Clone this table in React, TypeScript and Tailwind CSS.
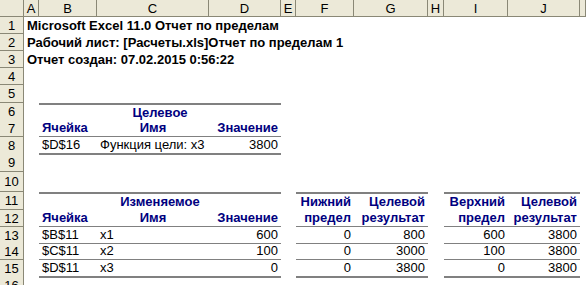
import React from "react";

const GRID =
  "grid grid-cols-[24px_15px_58px_112px_72px_15px_58px_74px_16px_64px_72px_1fr]";

const HDR = "bg-[#ECE9D8] border-[#8a8876]";

function RowNum({ n }: { n: number }) {
  return (
    <div
      className={`${HDR} border-r border-b flex items-center justify-center text-black leading-none`}
    >
      {n}
    </div>
  );
}

const cell = "flex items-end px-[3px] pb-[1px] leading-[15px] whitespace-nowrap";
const hd = "font-bold text-[#000080]";
const T = "border-t-2 border-[#808080]";
const Bthin = "border-b border-[#808080]";
const Bthick = "border-b-2 border-[#808080]";

export default function App() {
  const cols = ["A", "B", "C", "D", "E", "F", "G", "H", "I", "J", ""];
  return (
    <div
      className="w-[586px] h-[285px] overflow-hidden bg-white text-[13px] text-black"
      style={{ fontFamily: '"Liberation Sans", Arial, sans-serif' }}
    >
      {/* column header */}
      <div className={`${GRID} h-[17px]`}>
        <div className={`${HDR} border-r border-b`} />
        {cols.map((c, i) => (
          <div
            key={i}
            className={`${HDR} border-r border-b flex items-center justify-center leading-none`}
          >
            {c}
          </div>
        ))}
      </div>

      {/* row 1 */}
      <div className={`${GRID} h-[17px]`}>
        <RowNum n={1} />
        <div className={`${cell} col-span-9 font-bold`}>Microsoft Excel 11.0 Отчет по пределам</div>
      </div>
      {/* row 2 */}
      <div className={`${GRID} h-[17px]`}>
        <RowNum n={2} />
        <div className={`${cell} col-span-9 font-bold`}>Рабочий лист: [Расчеты.xls]Отчет по пределам 1</div>
      </div>
      {/* row 3 */}
      <div className={`${GRID} h-[17px]`}>
        <RowNum n={3} />
        <div className={`${cell} col-span-9 font-bold`}>Отчет создан: 07.02.2015 0:56:22</div>
      </div>
      {/* row 4 */}
      <div className={`${GRID} h-[17px]`}>
        <RowNum n={4} />
      </div>
      {/* row 5 */}
      <div className={`${GRID} h-[18px]`}>
        <RowNum n={5} />
      </div>
      {/* row 6 */}
      <div className={`${GRID} h-[17px]`}>
        <RowNum n={6} />
        <div />
        <div className={`${cell} ${hd} ${T} col-span-3 justify-center`}>Целевое</div>
      </div>
      {/* row 7 */}
      <div className={`${GRID} h-[17px]`}>
        <RowNum n={7} />
        <div />
        <div className={`${cell} ${hd} ${Bthin}`}>Ячейка</div>
        <div className={`${cell} ${hd} ${Bthin} justify-center`}>Имя</div>
        <div className={`${cell} ${hd} ${Bthin} justify-end`}>Значение</div>
      </div>
      {/* row 8 */}
      <div className={`${GRID} h-[17px]`}>
        <RowNum n={8} />
        <div />
        <div className={`${cell} ${Bthick}`}>$D$16</div>
        <div className={`${cell} ${Bthick}`}>Функция цели: x3</div>
        <div className={`${cell} ${Bthick} justify-end`}>3800</div>
      </div>
      {/* row 9 */}
      <div className={`${GRID} h-[18px]`}>
        <RowNum n={9} />
      </div>
      {/* row 10 */}
      <div className={`${GRID} h-[20px]`}>
        <RowNum n={10} />
      </div>
      {/* row 11 */}
      <div className={`${GRID} h-[18px]`}>
        <RowNum n={11} />
        <div />
        <div className={`${cell} ${hd} ${T} col-span-3 justify-center`}>Изменяемое</div>
        <div />
        <div className={`${cell} ${hd} ${T} justify-end`}>Нижний</div>
        <div className={`${cell} ${hd} ${T} justify-end`}>Целевой</div>
        <div />
        <div className={`${cell} ${hd} ${T} justify-end`}>Верхний</div>
        <div className={`${cell} ${hd} ${T} justify-end`}>Целевой</div>
      </div>
      {/* row 12 */}
      <div className={`${GRID} h-[17px]`}>
        <RowNum n={12} />
        <div />
        <div className={`${cell} ${hd} ${Bthin}`}>Ячейка</div>
        <div className={`${cell} ${hd} ${Bthin} justify-center`}>Имя</div>
        <div className={`${cell} ${hd} ${Bthin} justify-end`}>Значение</div>
        <div />
        <div className={`${cell} ${hd} ${Bthin} justify-end`}>предел</div>
        <div className={`${cell} ${hd} ${Bthin} justify-end`}>результат</div>
        <div />
        <div className={`${cell} ${hd} ${Bthin} justify-end`}>предел</div>
        <div className={`${cell} ${hd} ${Bthin} justify-end`}>результат</div>
      </div>
      {[
        { n: 13, h: "h-[16px]", c: "$B$11", name: "x1", v: "600", lo: "0", lr: "800", up: "600", ur: "3800", last: false },
        { n: 14, h: "h-[17px]", c: "$C$11", name: "x2", v: "100", lo: "0", lr: "3000", up: "100", ur: "3800", last: false },
        { n: 15, h: "h-[17px]", c: "$D$11", name: "x3", v: "0", lo: "0", lr: "3800", up: "0", ur: "3800", last: true },
      ].map((r) => {
        const b = r.last ? Bthick : Bthin;
        return (
          <div key={r.n} className={`${GRID} ${r.h}`}>
            <RowNum n={r.n} />
            <div />
            <div className={`${cell} ${b}`}>{r.c}</div>
            <div className={`${cell} ${b}`}>{r.name}</div>
            <div className={`${cell} ${b} justify-end`}>{r.v}</div>
            <div />
            <div className={`${cell} ${b} justify-end`}>{r.lo}</div>
            <div className={`${cell} ${b} justify-end`}>{r.lr}</div>
            <div />
            <div className={`${cell} ${b} justify-end`}>{r.up}</div>
            <div className={`${cell} ${b} justify-end`}>{r.ur}</div>
          </div>
        );
      })}
      <div className={`${GRID} h-[17px]`}>
        <RowNum n={16} />
      </div>
    </div>
  );
}
